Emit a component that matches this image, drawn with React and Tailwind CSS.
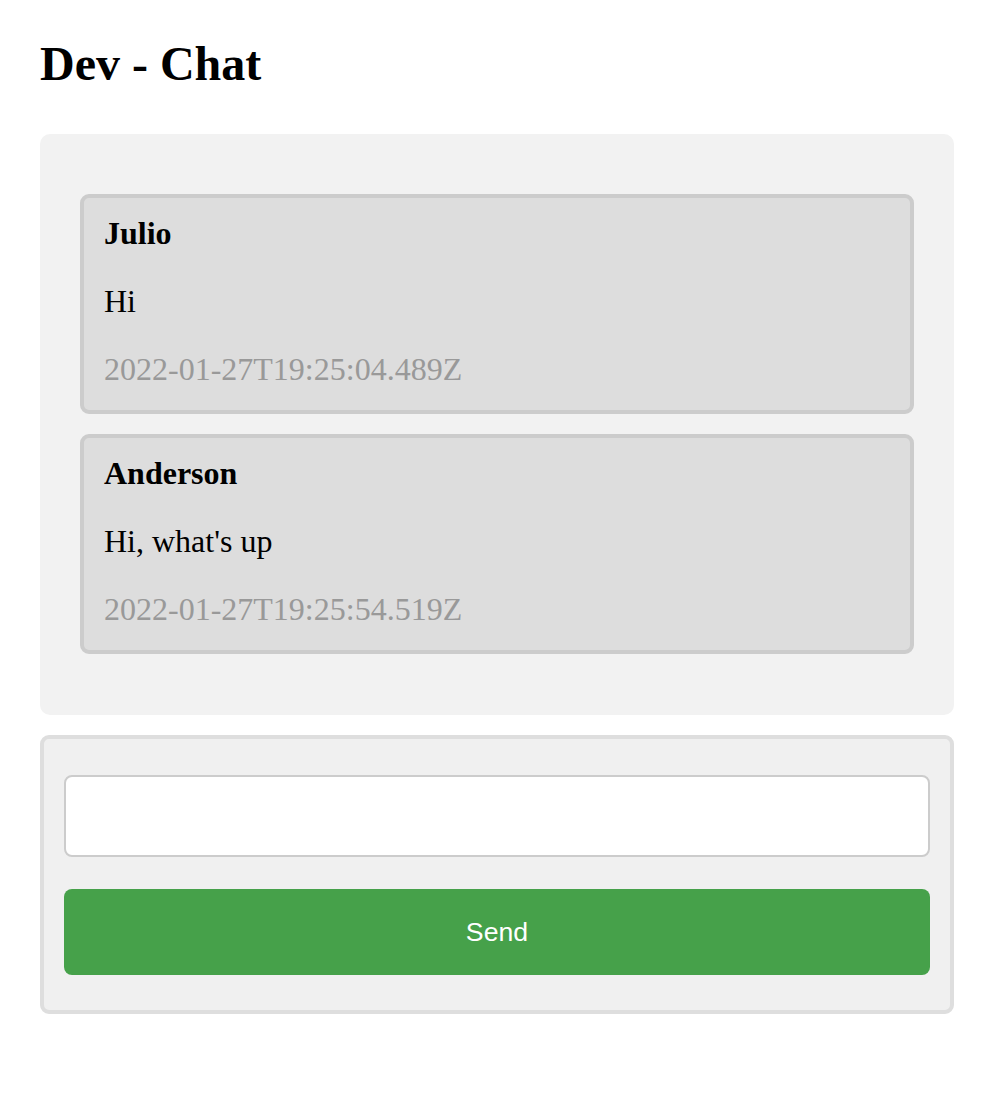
const MESSAGES = [
  { id: 1, user: "Julio", text: "Hi", date: "2022-01-27T19:25:04.489Z" },
  { id: 2, user: "Anderson", text: "Hi, what's up", date: "2022-01-27T19:25:54.519Z" },
];

function Message({ user, text, date }) {
  return (
    <div className="flex flex-col gap-[31px] bg-[#dddddd] border-4 border-[#cccccc] rounded-[9px] px-[20px] pt-[17px] pb-[22px]">
      <strong className="text-[32px] leading-[37px] font-bold text-black">{user}</strong>
      <p className="text-[32px] leading-[37px] text-black">{text}</p>
      <p className="text-[32px] leading-[37px] text-[#999999]">{date}</p>
    </div>
  );
}

export default function App() {
  return (
    <div className="min-h-screen bg-white px-[40px] pt-[36px] pb-[90px]" style={{ fontFamily: '"Liberation Serif", "Times New Roman", serif' }}>
      <h2 className="text-[48px] leading-[55px] font-bold text-black">Dev - Chat</h2>

      {/* message list */}
      <div className="mt-[43px] w-[914px] bg-[#f2f2f2] rounded-[10px] px-[40px] pt-[60px] pb-[61px] flex flex-col gap-[20px]">
        {MESSAGES.map((m) => (
          <Message key={m.id} {...m} />
        ))}
      </div>

      {/* composer */}
      <div className="mt-[20px] w-[914px] bg-[#f0f0f0] border-4 border-[#dedede] rounded-[9px] px-[20px] pt-[36px] pb-[35px] flex flex-col gap-[32px]">
        <input className="h-[82px] w-full bg-white border-2 border-[#cccccc] rounded-[8px] px-4 outline-none text-[26px]" />
        <button className="h-[86px] w-full bg-[#46a14a] rounded-[8px] text-white text-[26.67px]" style={{ fontFamily: '"Liberation Sans", Arial, sans-serif' }}>
          Send
        </button>
      </div>
    </div>
  );
}
